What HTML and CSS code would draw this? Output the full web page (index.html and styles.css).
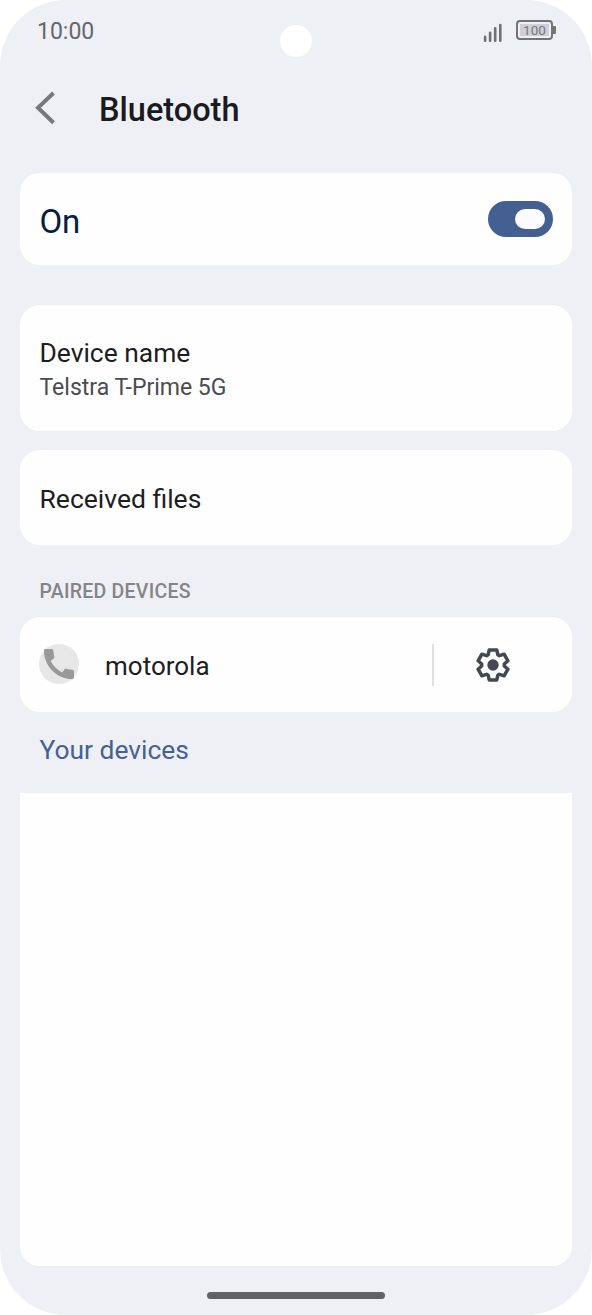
FILE: index.html
```html
<!DOCTYPE html>
<html lang="en">
<head>
<meta charset="utf-8">
<title>Bluetooth</title>
<link rel="stylesheet" href="styles.css">
</head>
<body>
<main class="phone">
  <div class="camera"></div>
  <div class="status">
    <span class="time">10:00</span>
    <div class="status-icons">
      <svg class="signal" width="20" height="20" viewBox="0 0 20 20">
        <path d="M2.1 13.8v4M7.1 9.8v8M12.2 5.3v12.5M17.3 2v15.8"/>
      </svg>
      <div class="battery"><span class="level">100</span></div>
    </div>
  </div>
  <header class="header">
    <svg class="back" width="22" height="34" viewBox="0 0 22 34"><path d="M18.5 2L3 16.8l15.500 15"/></svg>
    <h1 class="title">Bluetooth</h1>
  </header>
  <section class="card power">
    <span class="power-label">On</span>
    <div class="switch"><div class="thumb"></div></div>
  </section>
  <section class="card device">
    <div class="label">Device name</div>
    <div class="sub">Telstra T-Prime 5G</div>
  </section>
  <section class="card files"><span class="label">Received files</span></section>
  <h2 class="group">PAIRED DEVICES</h2>
  <section class="card paired">
    <svg class="call" width="40" height="40" viewBox="0 0 24 24">
      <circle class="call-bg" cx="12" cy="12" r="12"/>
      <path class="call-icon" d="M20.01 15.38c-1.23 0-2.420-.2-3.530-.560-.350-.120-.740-.030-1.010.240l-1.570 1.970c-2.830-1.350-5.480-3.900-6.890-6.830l1.950-1.660c.270-.280.350-.670.240-1.020-.370-1.110-.560-2.300-.560-3.530 0-.540-.450-.990-.990-.990H4.190C3.650 3 3 3.240 3 3.990 3 13.280 10.730 21 20.010 21c.710 0 .990-.630.990-1.180v-3.450c0-.540-.450-.990-.990-.990z"/>
    </svg>
    <span class="label name">motorola</span>
    <div class="divider"></div>
    <svg class="gear" width="36" height="36" viewBox="-18 -18 36 36">
      <path d="M-3.800-15H3.800L4.800-10.300 6.500-9.300 11.100-10.800 14.900-4.200 11.300-1V1L14.900 4.200 11.100 10.800 6.500 9.300 4.800 10.300 3.800 15H-3.800L-4.800 10.300-6.500 9.300-11.100 10.800-14.900 4.200-11.300 1V-1L-14.900-4.200-11.100-10.800-6.500-9.300-4.800-10.300Z"/>
      <circle class="gear-dot" r="5.700"/>
    </svg>
  </section>
  <div class="label link">Your devices</div>
  <section class="panel"></section>
  <footer class="nav"><div class="handle"></div></footer>
</main>
</body>
</html>
```
FILE: styles.css
```css
* { box-sizing: border-box; }
body { margin: 0; background: #fff; font-family: Roboto, sans-serif; }
.phone {
  position: relative;
  display: flex;
  flex-direction: column;
  width: 592px;
  height: 1315px;
  padding: 0 20px;
  overflow: hidden;
  border-radius: 66px;
  background: #eff0f6;
}
.camera {
  position: absolute;
  left: 280px;
  top: 25px;
  width: 32px;
  height: 32px;
  border-radius: 50%;
  background: #fff;
}
.status {
  display: flex;
  align-items: center;
  justify-content: space-between;
  height: 62px;
  padding: 0 16px 0 17px;
}
.time { font-size: 23px; color: #66666b; }
.status-icons { display: flex; align-items: center; gap: 13px; margin-top: -1px; }
.signal { margin-top: 4px; fill: none; stroke: #707075; stroke-width: 2.6; stroke-linecap: round; }
.battery {
  position: relative;
  display: flex;
  width: 37px;
  height: 20px;
  margin-right: 3px;
  margin-bottom: 1px;
  padding: 2px;
  border: 2px solid #737378;
  border-radius: 4px;
}
.battery::after {
  content: "";
  position: absolute;
  right: -5px;
  top: 4px;
  width: 3px;
  height: 8px;
  border-radius: 0 1px 1px 0;
  background: #737378;
}
.level {
  flex: 1;
  background: #cfcfd5;
  color: #77777b;
  font-size: 13.500px;
  line-height: 13px;
  text-align: center;
}
.header { display: flex; align-items: center; height: 95px; padding-left: 15px; margin-bottom: 16.400px; }
.back { margin-right: 42px; margin-bottom: 4px; fill: none; stroke: #79797b; stroke-width: 4; }
.title { margin: 0; font-size: 32.500px; font-weight: 500; color: #191b21; }
.card { border-radius: 20px; background: #fefefe; }
.power {
  display: flex;
  align-items: center;
  justify-content: space-between;
  height: 92px;
  margin-bottom: 39.600px;
  padding: 0 19.400px;
}
.power-label { padding-top: 4px; font-size: 33px; color: #041d42; }
.switch {
  display: flex;
  align-items: center;
  justify-content: flex-end;
  width: 65px;
  height: 36px;
  padding-right: 8px;
  border-radius: 18px;
  background: #445f91;
}
.thumb { width: 30px; height: 20px; border-radius: 10px; background: #fcfbff; }
.device { height: 126px; margin-bottom: 19px; padding: 32px 19.500px 0; }
.label { font-size: 26.400px; line-height: 33px; color: #1d1d22; }
.sub { font-size: 23px; line-height: 35px; color: #4a4b53; }
.files { height: 95px; padding: 32px 19.500px 0; }
.files .label { font-size: 26.500px; }
.group { height: 72px; margin: 0; padding: 0 19.500px; font-size: 19.500px; font-weight: 500; line-height: 94px; letter-spacing: 0.25px; color: #858589; }
.paired { display: flex; align-items: center; height: 95px; padding: 1px 0 0 19px; }
.call { margin-bottom: 2px; }
.call-bg { fill: #e7e7e7; }
.call-icon { fill: #999; }
.paired .name { flex: 1; padding: 3px 0 0 26px; font-size: 26px; }
.divider { width: 2px; height: 42px; margin-right: 41px; background: #e0e0e2; }
.gear { margin-right: 61px; fill: none; stroke: #454850; stroke-width: 3.500; stroke-linejoin: round; }
.gear-dot { fill: #454850; stroke: none; }
.link { height: 81px; padding: 0 19.500px; line-height: 77px; color: #466196; }
.panel { height: 473px; border-radius: 0 0 20px 20px; background: #fefefe; }
.nav { display: flex; justify-content: center; padding-top: 26px; }
.handle { width: 178px; height: 7px; border-radius: 4px; background: #626266; }
```
